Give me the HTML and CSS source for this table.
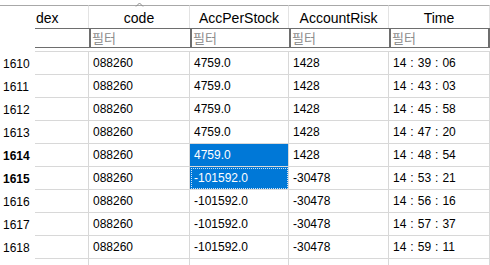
FILE: index.html
```html
<!DOCTYPE html>
<html>
<head>
<meta charset="utf-8">
<link rel="stylesheet" href="styles.css">
</head>
<body>
<div class="view">
  <div class="grid">
    <div class="hcell corner"></div>
    <div class="hcell left">dex</div>
    <div class="hcell sorted">code<svg class="caret" width="9" height="5" viewBox="0 0 9 5"><polyline points="1,4.5 4.5,1 8,4.5" fill="none" stroke="#8a8a8a" stroke-width="1"/></svg></div>
    <div class="hcell">AccPerStock</div>
    <div class="hcell">AccountRisk</div>
    <div class="hcell">Time</div>

    <div class="fcell corner"></div>
    <div class="fcell"><div class="filter first"></div></div>
    <div class="fcell"><div class="filter">필터</div></div>
    <div class="fcell"><div class="filter">필터</div></div>
    <div class="fcell"><div class="filter">필터</div></div>
    <div class="fcell"><div class="filter last">필터</div></div>

    <div class="rh">1610</div><div class="c"></div><div class="c">088260</div><div class="c">4759.0</div><div class="c">1428</div><div class="c">14<span class="col">:</span>39<span class="col">:</span>06</div>
    <div class="rh">1611</div><div class="c"></div><div class="c">088260</div><div class="c">4759.0</div><div class="c">1428</div><div class="c">14<span class="col">:</span>43<span class="col">:</span>03</div>
    <div class="rh">1612</div><div class="c"></div><div class="c">088260</div><div class="c">4759.0</div><div class="c">1428</div><div class="c">14<span class="col">:</span>45<span class="col">:</span>58</div>
    <div class="rh">1613</div><div class="c"></div><div class="c">088260</div><div class="c">4759.0</div><div class="c">1428</div><div class="c">14<span class="col">:</span>47<span class="col">:</span>20</div>
    <div class="rh bold">1614</div><div class="c"></div><div class="c">088260</div><div class="c sel">4759.0</div><div class="c">1428</div><div class="c">14<span class="col">:</span>48<span class="col">:</span>54</div>
    <div class="rh bold">1615</div><div class="c"></div><div class="c">088260</div><div class="c sel focus">-101592.0</div><div class="c">-30478</div><div class="c">14<span class="col">:</span>53<span class="col">:</span>21</div>
    <div class="rh">1616</div><div class="c"></div><div class="c">088260</div><div class="c">-101592.0</div><div class="c">-30478</div><div class="c">14<span class="col">:</span>56<span class="col">:</span>16</div>
    <div class="rh">1617</div><div class="c"></div><div class="c">088260</div><div class="c">-101592.0</div><div class="c">-30478</div><div class="c">14<span class="col">:</span>57<span class="col">:</span>37</div>
    <div class="rh">1618</div><div class="c"></div><div class="c">088260</div><div class="c">-101592.0</div><div class="c">-30478</div><div class="c">14<span class="col">:</span>59<span class="col">:</span>11</div>
    <div class="rh stub"></div><div class="c stub"></div><div class="c stub"></div><div class="c stub"></div><div class="c stub"></div><div class="c stub"></div>
  </div>
</div>
</body>
</html>
```

FILE: styles.css
```css
* { box-sizing: border-box; }
html, body { margin: 0; padding: 0; background: #fff; }
body { width: 490px; height: 265px; overflow: hidden; font-family: "Liberation Sans", Arial, sans-serif; color: #000; }

.view { padding-top: 5px; width: 490px; overflow: hidden; }

.grid {
  display: grid;
  grid-template-columns: 35px 54px 101px 99px 100px 101px;
  grid-template-rows: 23px 24px repeat(9, 23px) 6px;
}

.hcell {
  border-top: 1px solid #a8a8a8;
  border-right: 1px solid #e3e3e3;
  font-size: 14px;
  display: flex;
  align-items: center;
  justify-content: center;
  padding-top: 1px;
  position: relative;
  background: #fff;
}
.hcell.corner { border-right: none; }
.hcell.left { justify-content: flex-start; padding-left: 1px; }

.caret { position: absolute; left: 46px; top: -4px; }

.fcell {
  border-bottom: 1px solid #d8d8d8;
  padding-bottom: 4px;
}
.fcell.corner { border-bottom: none; }
.filter {
  height: 20px;
  border-top: 1px solid #6e6e6e;
  border-bottom: 1px solid #6e6e6e;
  border-left: 2px solid #6e6e6e;
  font-family: "Noto Sans CJK KR", sans-serif;
  font-size: 13px;
  line-height: 18px;
  color: #8c8c8c;
  padding-left: 1px;
}
.filter.first { border-left: none; }
.filter.last { border-right: 2px solid #6e6e6e; }

.rh {
  font-size: 12px;
  display: flex;
  align-items: center;
  padding-left: 3px;
}
.rh.bold { font-weight: bold; }

.c {
  border-right: 1px solid #d8d8d8;
  border-bottom: 1px solid #d8d8d8;
  font-size: 12px;
  display: flex;
  align-items: center;
  padding-left: 4px;
  white-space: nowrap;
}
.c.sel { background: #0078d7; color: #fff; }
.c.focus { outline: 1px dotted #cfe3f7; outline-offset: -2px; }
.stub { border-bottom: none; }

.col { margin: 0 4px; }
```
